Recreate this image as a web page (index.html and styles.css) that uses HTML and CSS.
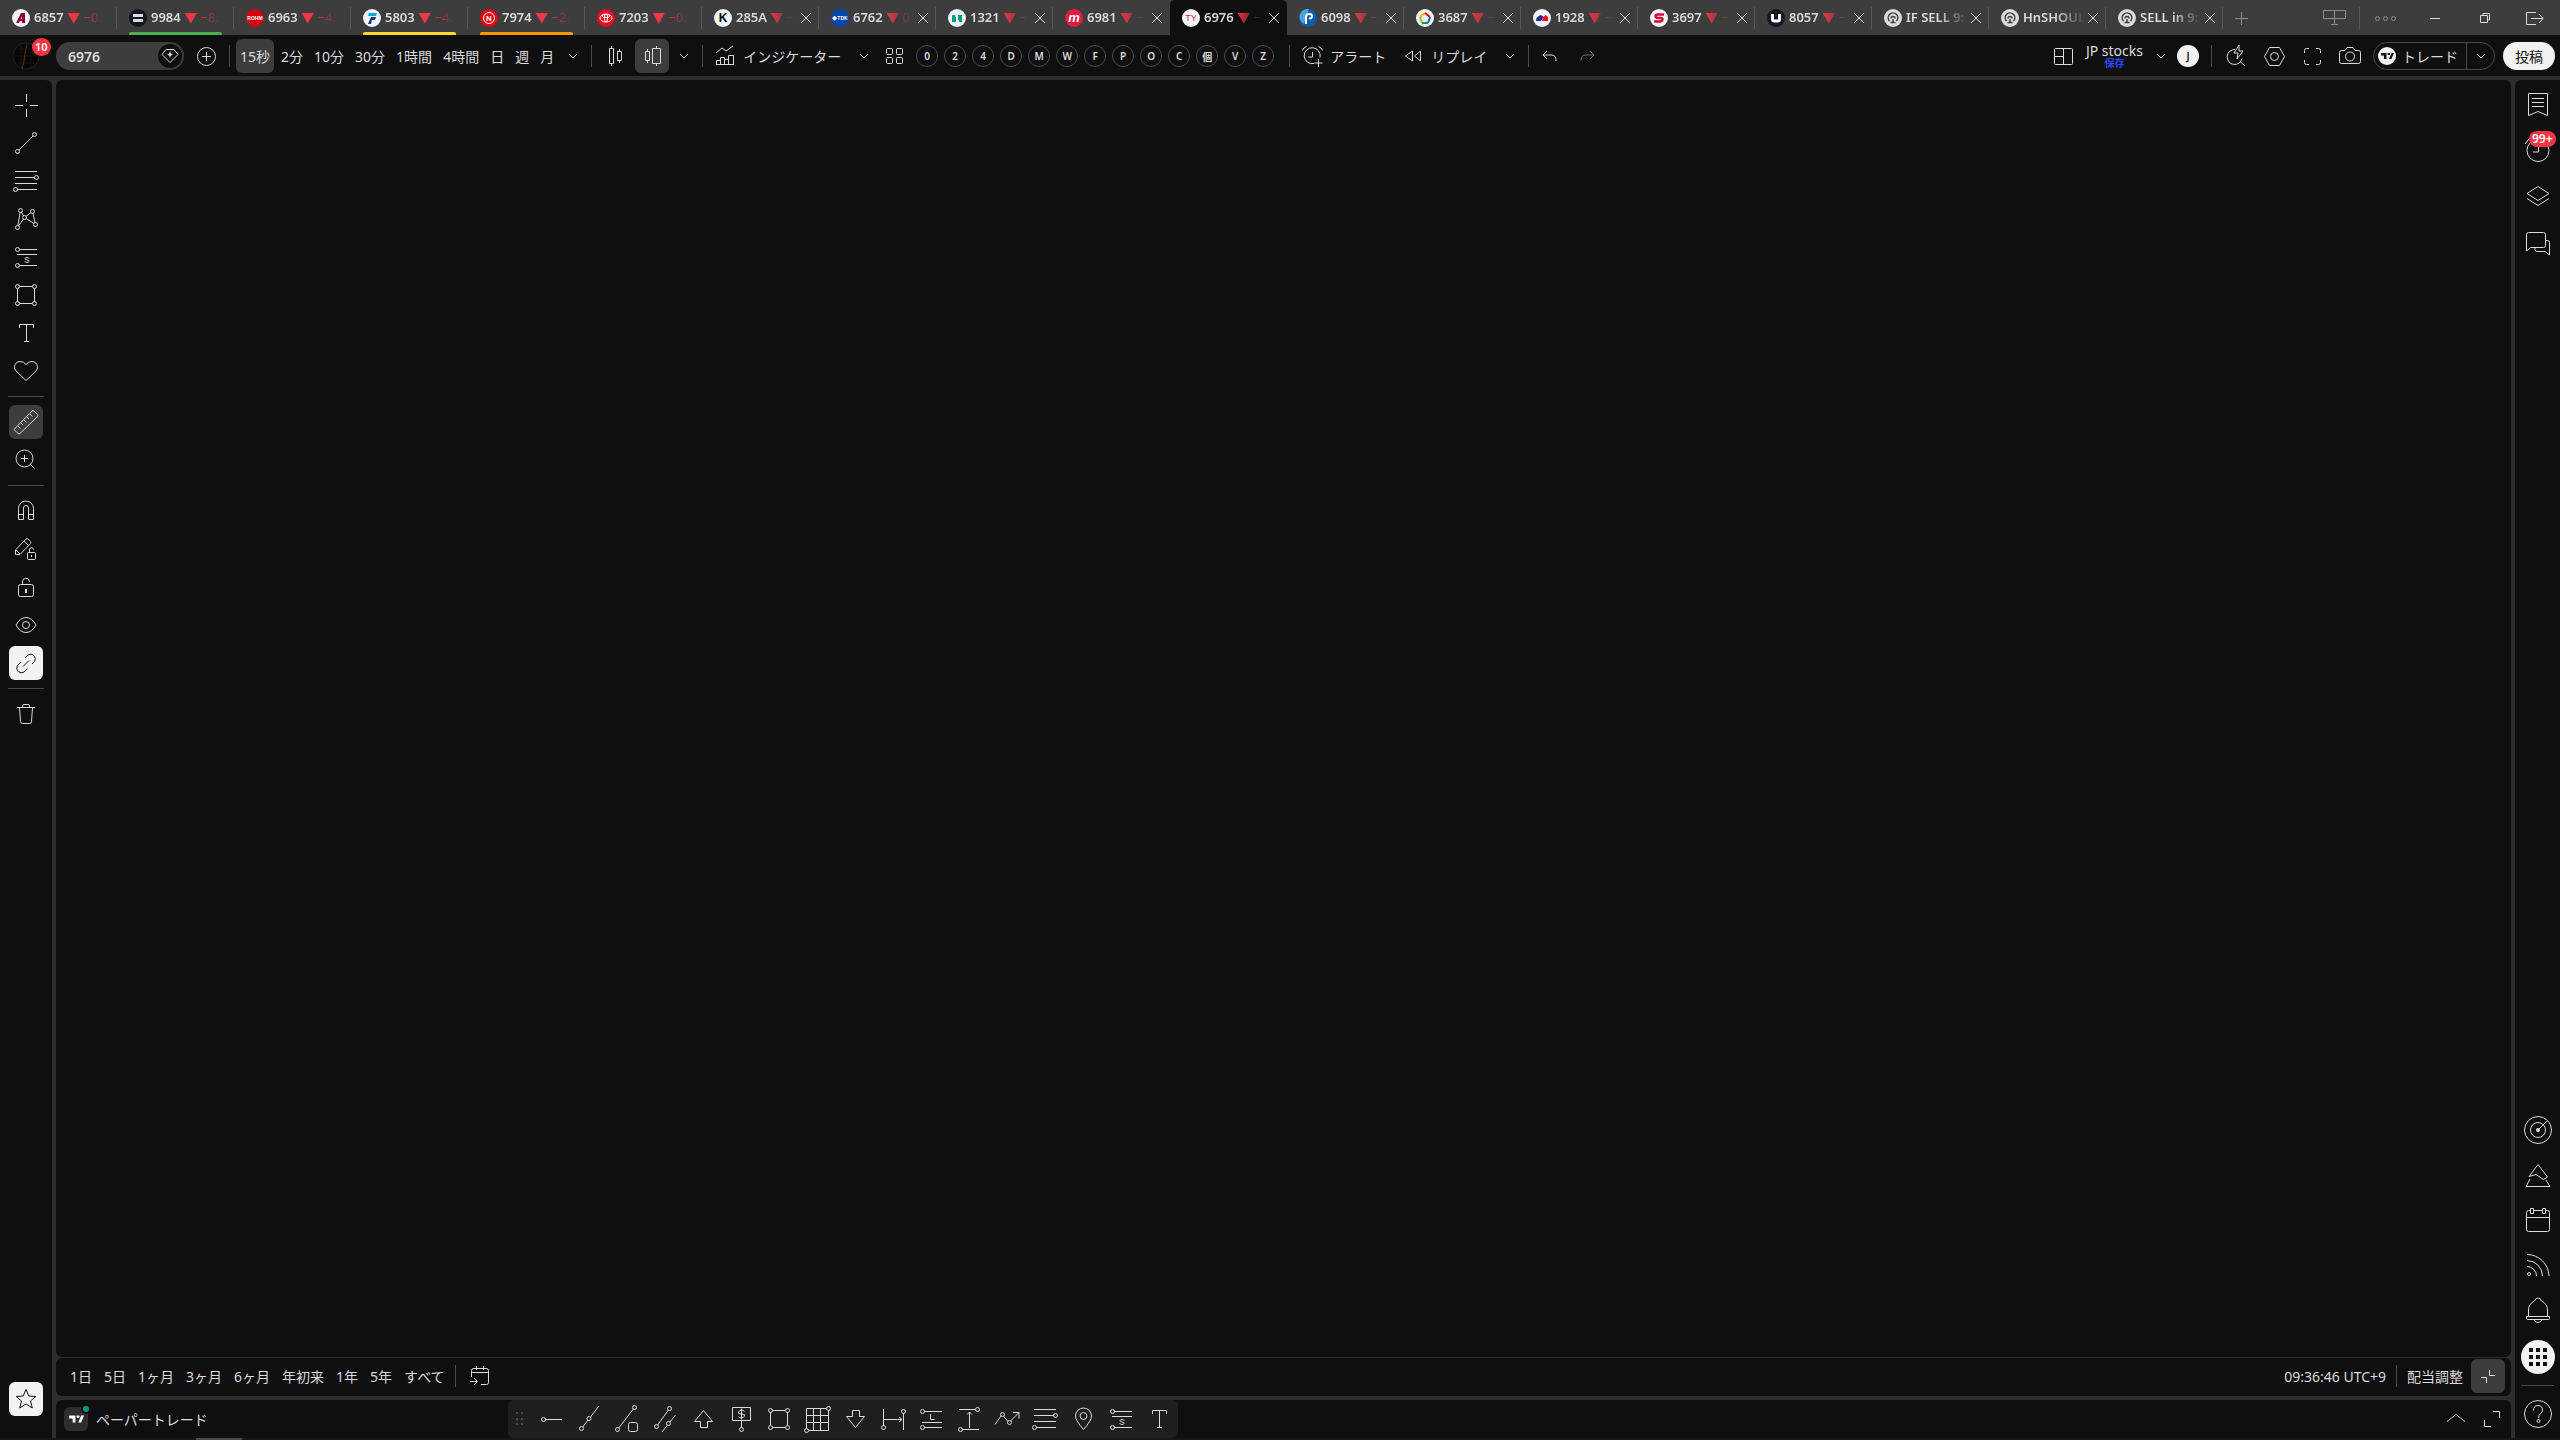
FILE: index.html
```html
<!DOCTYPE html>
<html lang="ja">
<head>
    <meta charset="UTF-8">
    <meta name="viewport" content="width=device-width, initial-scale=1.0">
    <title>6976</title>
    <link rel="stylesheet" href="styles.css">
</head>
<body>
    <svg class="sprite" aria-hidden="true">
        <symbol id="i-close" viewBox="0 0 12 12"><path d="M1 1l10 10M11 1L1 11"/></symbol>
        <symbol id="i-chevron" viewBox="0 0 10 10"><path d="M1 3l4 4 4-4"/></symbol>
        <symbol id="i-cross" viewBox="0 0 28 28"><path d="M3 14.500h8M18 14.500h8M14.500 3v8M14.500 18v8"/></symbol>
        <symbol id="i-line" viewBox="0 0 28 28"><path d="M5.500 22.500l17-17"/><circle class="node" cx="5.500" cy="22.500" r="2"/><circle class="node" cx="22.500" cy="5.500" r="2"/></symbol>
        <symbol id="i-fib" viewBox="0 0 28 28"><path d="M3 4.500h22M3 10.500h21M3 16.500h22M4 22.500h21"/><circle class="node" cx="24.500" cy="10.500" r="2"/><circle class="node" cx="3.500" cy="22.500" r="2"/></symbol>
        <symbol id="i-pattern" viewBox="0 0 28 28"><path d="M5.500 22.500l3-17 4 7 8-6 3 13-11-7z"/><circle class="node" cx="8.500" cy="5.500" r="2"/><circle class="node" cx="20.500" cy="6.500" r="2"/><circle class="node" cx="12.500" cy="12.500" r="2"/><circle class="node" cx="5.500" cy="22.500" r="2"/><circle class="node" cx="23.500" cy="19.500" r="2"/></symbol>
        <symbol id="i-short" viewBox="0 0 28 28"><path d="M6 6.500h19M5 11.500h20M6 22.500h19M17 16v-.5q-.3-1-2-1t-2 1 2 1.500 2 1.500-2 1-2-1V18"/><circle class="node" cx="5.500" cy="6.500" r="2"/><circle class="node" cx="5.500" cy="22.500" r="2"/></symbol>
        <symbol id="i-rect" viewBox="0 0 28 28"><path d="M5.500 5.500h17v17h-17z"/><circle class="node" cx="5.500" cy="5.500" r="2"/><circle class="node" cx="22.500" cy="5.500" r="2"/><circle class="node" cx="5.500" cy="22.500" r="2"/><circle class="node" cx="22.500" cy="22.500" r="2"/></symbol>
        <symbol id="i-text" viewBox="0 0 28 28"><path d="M7.500 9V5.500h14V9M14.500 5.500v17M12 22.500h5"/></symbol>
        <symbol id="i-tv" viewBox="0 0 28 28"><path class="solid" d="M2 8h11v12H8v-7H2zM18 20h5l5-12h-5zM15 8h5a2.500 2.500 0 1 1-5 2.500z"/></symbol>
        <symbol id="i-cap" viewBox="0 0 18 18"><circle cx="9" cy="9" r="9" fill="#dbdbdb"/><path d="M5.500 12a4.800 4.800 0 1 1 7 0M7 9.500a2 2 0 1 1 4 0M9 10v3.500M6.500 13.500h5" fill="none" stroke="#3d3d3d" stroke-width="1.500"/></symbol>
    </svg>

    <header class="tabs">
        <div class="tab pinned"><svg class="favicon" viewBox="0 0 18 18"><circle cx="9" cy="9" r="9" fill="#f0f3fa"/><path d="M4 14L9 4h4v10h-3v-2H8l-1 2z" fill="#8a0038"/><path d="M9 10l1-3v3z" fill="#fff"/></svg><a href="#6857">6857 <i>▼</i> <b>−0.</b></a></div>
        <div class="tab pinned green"><svg class="favicon" viewBox="0 0 18 18"><circle cx="9" cy="9" r="9" fill="#131722"/><path d="M4 5h10v3H4zM4 10h10v3H4z" fill="#ddd"/></svg><a href="#9984">9984 <i>▼</i> <b>−8.</b></a></div>
        <div class="tab pinned"><svg class="favicon" viewBox="0 0 18 18"><circle cx="9" cy="9" r="9" fill="#d7000f"/><text x="9" y="11" font-size="5" text-anchor="middle" fill="#fff">ROHM</text></svg><a href="#6963">6963 <i>▼</i> <b>−4.</b></a></div>
        <div class="tab pinned yellow"><svg class="favicon" viewBox="0 0 18 18"><circle cx="9" cy="9" r="9" fill="#f0f3fa"/><path d="M6 4h8l-1 3H5z" fill="#00a7e5"/><path d="M8 8h5l-1 3H9l-1 4H5z" fill="#0b3c8c"/></svg><a href="#5803">5803 <i>▼</i> <b>−4.</b></a></div>
        <div class="tab pinned orange"><svg class="favicon" viewBox="0 0 18 18"><circle cx="9" cy="9" r="9" fill="#e60012"/><circle cx="9" cy="9" r="5.500" fill="none" stroke="#fff"/><text x="9" y="12" font-size="8" text-anchor="middle" fill="#fff">N</text></svg><a href="#7974">7974 <i>▼</i> <b>−2.</b></a></div>
        <div class="tab pinned"><svg class="favicon" viewBox="0 0 18 18"><circle cx="9" cy="9" r="9" fill="#eb0a1e"/><g fill="none" stroke="#fff"><ellipse cx="9" cy="9" rx="6" ry="4"/><ellipse cx="9" cy="7" rx="4" ry="1.500"/><ellipse cx="9" cy="9" rx="1.500" ry="4"/></g></svg><a href="#7203">7203 <i>▼</i> <b>−0.</b></a></div>
        <div class="tab"><svg class="favicon" viewBox="0 0 18 18"><circle cx="9" cy="9" r="9" fill="#f0f3fa"/><text x="9" y="13" font-size="12" text-anchor="middle" fill="#000">K</text></svg><a href="#285A">285A <i>▼</i> <b>−</b></a><button aria-label="閉じる"><svg><use href="#i-close"/></svg></button></div>
        <div class="tab"><svg class="favicon" viewBox="0 0 18 18"><circle cx="9" cy="9" r="9" fill="#0046ad"/><text x="9" y="11" font-size="5" text-anchor="middle" fill="#fff">◆TDK</text></svg><a href="#6762">6762 <i>▼</i> <b>0</b></a><button aria-label="閉じる"><svg><use href="#i-close"/></svg></button></div>
        <div class="tab"><svg class="favicon" viewBox="0 0 18 18"><circle cx="9" cy="9" r="9" fill="#f0f3fa"/><path d="M4 6h4v7H4zM10 6h4v7h-4z" fill="#009f7f"/><path d="M7 6l4 7" stroke="#f0f3fa"/></svg><a href="#1321">1321 <i>▼</i> <b>−</b></a><button aria-label="閉じる"><svg><use href="#i-close"/></svg></button></div>
        <div class="tab"><svg class="favicon" viewBox="0 0 18 18"><circle cx="9" cy="9" r="9" fill="#e31b43"/><text x="9" y="13" font-size="13" font-style="italic" text-anchor="middle" fill="#fff">m</text></svg><a href="#6981">6981 <i>▼</i> <b>−</b></a><button aria-label="閉じる"><svg><use href="#i-close"/></svg></button></div>
        <div class="tab active"><svg class="favicon" viewBox="0 0 18 18"><circle cx="9" cy="9" r="9" fill="#f0f3fa"/><text class="thin" x="9" y="12" font-size="9" text-anchor="middle" fill="#e0243a">TY</text></svg><a href="#6976">6976 <i>▼</i> <b>−</b></a><button aria-label="閉じる"><svg><use href="#i-close"/></svg></button></div>
        <div class="tab"><svg class="favicon" viewBox="0 0 18 18"><circle cx="9" cy="9" r="9" fill="#0b5cab"/><path d="M1 5a9 9 0 0 1 9-5L5 15a9 9 0 0 1-4-10" fill="#4aa3d4"/><path d="M7 15V8q0-3 3-3 4 0 3 3-1 2-3 1" fill="none" stroke="#fff" stroke-width="2"/></svg><a href="#6098">6098 <i>▼</i> <b>−</b></a><button aria-label="閉じる"><svg><use href="#i-close"/></svg></button></div>
        <div class="tab"><svg class="favicon" viewBox="0 0 18 18"><circle cx="9" cy="9" r="9" fill="#f0f3fa"/><g fill="none" stroke-width="2"><path d="M4 8l5-4" stroke="#fbb900"/><path d="M9 4l5 4" stroke="#e60012"/><path d="M14 8l-2 6" stroke="#0068b7"/><path d="M12 14H6" stroke="#009944"/><path d="M6 14L4 8" stroke="#8fc31f"/></g></svg><a href="#3687">3687 <i>▼</i> <b>−</b></a><button aria-label="閉じる"><svg><use href="#i-close"/></svg></button></div>
        <div class="tab"><svg class="favicon" viewBox="0 0 18 18"><circle cx="9" cy="9" r="9" fill="#f0f3fa"/><path d="M3 12q0-4 3-5l1-1 3 1v2l-2 3H3z" fill="#1d2f8f"/><path d="M9 12l1-4 3-2 2 2v4z" fill="#f01020"/></svg><a href="#1928">1928 <i>▼</i> <b>−</b></a><button aria-label="閉じる"><svg><use href="#i-close"/></svg></button></div>
        <div class="tab"><svg class="favicon" viewBox="0 0 18 18"><circle cx="9" cy="9" r="9" fill="#f0f3fa"/><path d="M14 5.500H8q-2.500 0-2.500 1.500T8 9h2.500q2 0 2 1.500t-2.500 2H4" fill="none" stroke="#d80c32" stroke-width="2.500"/></svg><a href="#3697">3697 <i>▼</i> <b>−</b></a><button aria-label="閉じる"><svg><use href="#i-close"/></svg></button></div>
        <div class="tab"><svg class="favicon" viewBox="0 0 18 18"><circle cx="9" cy="9" r="9" fill="#131722"/><path d="M5.500 5v5q0 2 2 2h3q2 0 2-2V5" fill="none" stroke="#fff" stroke-width="3"/></svg><a href="#8057">8057 <i>▼</i> <b>−</b></a><button aria-label="閉じる"><svg><use href="#i-close"/></svg></button></div>
        <div class="tab"><svg class="favicon"><use href="#i-cap"/></svg><a href="#if-sell">IF SELL 9:</a><button aria-label="閉じる"><svg><use href="#i-close"/></svg></button></div>
        <div class="tab"><svg class="favicon"><use href="#i-cap"/></svg><a href="#hnshould">HnSHOULD</a><button aria-label="閉じる"><svg><use href="#i-close"/></svg></button></div>
        <div class="tab"><svg class="favicon"><use href="#i-cap"/></svg><a href="#sell-in">SELL in 9:</a><button aria-label="閉じる"><svg><use href="#i-close"/></svg></button></div>
        <button class="new-tab" aria-label="新しいタブ"><svg class="icon" viewBox="0 0 28 28"><path d="M14.500 8v13M8 14.500h13"/></svg></button>
        <div class="window-buttons">
            <button class="dim" aria-label="ウィンドウ"><svg class="icon" viewBox="0 0 28 28"><path d="M3.500 6.500h22v8h-22zM14.500 6.500v14M11 20.500h7"/></svg></button>
            <span class="divider"></span>
            <button class="dim" aria-label="メニュー"><svg class="icon" viewBox="0 0 28 28"><circle cx="6.500" cy="14.500" r="2"/><circle cx="14.500" cy="14.500" r="2"/><circle cx="22.500" cy="14.500" r="2"/></svg></button>
            <button aria-label="最小化"><svg class="icon" viewBox="0 0 28 28"><path d="M9 14.500h10"/></svg></button>
            <button aria-label="元に戻す"><svg class="icon" viewBox="0 0 28 28"><path d="M9.500 11.500h7v7h-7zM12 11V9.500h6.500V16H17"/></svg></button>
            <button aria-label="終了"><svg class="icon" viewBox="0 0 28 28"><path d="M15 8.500H5.500v12H15M10 14.500h12M18 10l4 4.500-4 4.500"/></svg></button>
        </div>
    </header>

    <div class="toolbar">
        <button class="avatar" aria-label="プロフィール"><svg viewBox="0 0 28 28"><circle cx="14" cy="14" r="13" fill="#060606" stroke="#242424"/><path d="M6 7h16M3 14h22M6 21h16M9 3v22M19 3v22" stroke="#151515"/><path d="M15 2l-2 9-1 8-2 8" stroke="#6e2810" fill="none"/></svg><span class="badge">10</span></button>
        <div class="symbol-search">
            <input type="text" value="6976" aria-label="シンボル検索">
            <button aria-label="フラグ"><svg class="icon small" viewBox="0 0 24 24"><path d="M8 5.500h8l4 5-8 8-8-8zM12 7.500v6M9.500 10.500h5"/><circle class="solid" cx="12" cy="10.500" r="1.500"/></svg></button>
        </div>
        <button class="tool add" aria-label="比較"><svg class="icon" viewBox="0 0 28 28"><circle cx="14.500" cy="14.500" r="9"/><path d="M14.500 10v9M10 14.500h9"/></svg></button>
        <span class="divider"></span>
        <button class="interval selected">15秒</button>
        <button class="interval">2分</button>
        <button class="interval">10分</button>
        <button class="interval">30分</button>
        <button class="interval">1時間</button>
        <button class="interval">4時間</button>
        <button class="interval">日</button>
        <button class="interval">週</button>
        <button class="interval">月</button>
        <button class="arrow" aria-label="時間足"><svg><use href="#i-chevron"/></svg></button>
        <span class="divider"></span>
        <button class="tool" aria-label="ローソク足"><svg class="icon" viewBox="0 0 28 28"><path d="M8.500 6.500h4v15h-4zM10.500 4v2.500M10.500 21.500V24M16.500 9.500h4v9h-4zM18.500 7v2.500M18.500 18.500V21"/></svg></button>
        <button class="tool selected" aria-label="中空ローソク足"><svg class="icon" viewBox="0 0 28 28"><path d="M7.500 9.500h4v9h-4zM9.500 7v2.500M9.500 18.500V21M14.500 6.500h8v15h-8zM18.500 4v2.500M18.500 21.500V24"/></svg></button>
        <button class="arrow" aria-label="チャートタイプ"><svg><use href="#i-chevron"/></svg></button>
        <span class="divider"></span>
        <button class="labelled"><svg class="icon small" viewBox="0 0 24 24"><path d="M3 9l6-5 4 3 7-5M3.500 20.500v-4h4v4zM7.500 20.500v-7h4v7M11.500 20.500v-5h4v5M15.500 20.500v-9h5v9zM3.500 20.500h17"/></svg>インジケーター</button>
        <button class="arrow" aria-label="お気に入り"><svg><use href="#i-chevron"/></svg></button>
        <button class="tool" aria-label="テンプレート"><svg class="icon" viewBox="0 0 28 28"><rect x="4.500" y="6.500" width="6" height="6" rx="1"/><rect x="14.500" y="6.500" width="6" height="6" rx="1"/><rect x="4.500" y="15.500" width="6" height="6" rx="1"/><rect x="14.500" y="15.500" width="6" height="6" rx="1"/></svg></button>
        <div class="templates">
            <button>0</button>
            <button>2</button>
            <button>4</button>
            <button>D</button>
            <button>M</button>
            <button>W</button>
            <button>F</button>
            <button>P</button>
            <button>O</button>
            <button>C</button>
            <button>個</button>
            <button>V</button>
            <button>Z</button>
        </div>
        <span class="divider"></span>
        <button class="labelled"><svg class="icon small" viewBox="0 0 24 24"><path d="M14 19.500a8 8 0 1 1 6-6M12.500 8v5H8M2.500 6.500q1-3 4-4M18.500 2.500q3 1 4 4M18.500 15v8M14.500 19h8"/></svg>アラート</button>
        <button class="labelled"><svg class="icon small" viewBox="0 0 24 24"><path d="M11.500 7v10l-7-5zM19.500 7v10l-6-5z"/></svg>リプレイ</button>
        <button class="arrow" aria-label="リプレイモード"><svg><use href="#i-chevron"/></svg></button>
        <span class="divider"></span>
        <button class="tool" aria-label="元に戻す"><svg class="icon" viewBox="0 0 28 28"><path d="M9 9l-4 4 4 4M5 13h8q5 0 5 5v1"/></svg></button>
        <button class="tool disabled" aria-label="やり直す"><svg class="icon" viewBox="0 0 28 28"><path d="M15 9l4 4-4 4M19 13h-8q-5 0-5 5v1"/></svg></button>

        <div class="toolbar-right">
            <button class="tool" aria-label="レイアウト"><svg class="icon" viewBox="0 0 28 28"><rect x="5.500" y="6.500" width="18" height="16" rx="1"/><path d="M14.500 6.500v16M5.500 14.500h9"/></svg></button>
            <button class="layout-name"><span>JP stocks</span><small>保存</small></button>
            <button class="arrow" aria-label="レイアウト管理"><svg><use href="#i-chevron"/></svg></button>
            <button class="user">J</button>
            <span class="divider"></span>
            <button class="tool" aria-label="クイック検索"><svg class="icon" viewBox="0 0 28 28"><path d="M13 7.500a7.500 7.500 0 1 0 7 9M18 19.500l5 4.500M17 3l-5 8h4l-1 6 6-8h-4z"/></svg></button>
            <button class="tool" aria-label="設定"><svg class="icon" viewBox="0 0 28 28"><path d="M9.500 5.500h10l5 9-5 9h-10l-5-9z"/><circle cx="14.500" cy="14.500" r="4"/></svg></button>
            <button class="tool" aria-label="全画面"><svg class="icon" viewBox="0 0 28 28"><path d="M6.500 11V8.500q0-2 2-2H11M18 6.500h2.500q2 0 2 2V11M22.500 18v2.500q0 2-2 2H18M11 22.500H8.500q-2 0-2-2V18"/></svg></button>
            <button class="tool" aria-label="スナップショット"><svg class="icon" viewBox="0 0 28 28"><path d="M5.500 8.500H9l2-3h6l2 3h3.500q2 0 2 2v9q0 2-2 2h-17q-2 0-2-2v-9q0-2 2-2z"/><circle cx="14" cy="14.500" r="4.500"/></svg></button>
            <div class="trade">
                <button><span class="tv"><svg><use href="#i-tv"/></svg></span>トレード</button>
                <button class="trade-arrow" aria-label="トレードメニュー"><svg class="chev"><use href="#i-chevron"/></svg></button>
            </div>
            <button class="publish">投稿</button>
        </div>
    </div>

    <div class="workspace">
        <nav class="rail left">
            <div class="group">
                <button class="tool" aria-label="十字カーソル"><svg class="icon"><use href="#i-cross"/></svg></button>
                <button class="tool" aria-label="トレンドライン"><svg class="icon"><use href="#i-line"/></svg></button>
                <button class="tool" aria-label="フィボナッチ"><svg class="icon"><use href="#i-fib"/></svg></button>
                <button class="tool" aria-label="パターン"><svg class="icon"><use href="#i-pattern"/></svg></button>
                <button class="tool" aria-label="予測"><svg class="icon"><use href="#i-short"/></svg></button>
                <button class="tool" aria-label="図形"><svg class="icon"><use href="#i-rect"/></svg></button>
                <button class="tool" aria-label="テキスト"><svg class="icon"><use href="#i-text"/></svg></button>
                <button class="tool" aria-label="アイコン"><svg class="icon" viewBox="0 0 28 28"><path d="M14 23.500L4 14a6 6 0 0 1-1.500-4.500 5.500 5.500 0 0 1 5.500-5q4 0 6 3 2-3 6-3a5.500 5.500 0 0 1 5.500 5A6 6 0 0 1 24 14z"/></svg></button>
            </div>
            <hr>
            <div class="group">
                <button class="tool selected" aria-label="計測"><svg class="icon" viewBox="0 0 28 28"><path d="M2.500 21L20 3q1-1 2 0l3.500 3.500q1 1 0 2L8 25.500q-1 .5-2 0L2.500 22q-.5-.5 0-1zM6 18l2.500 2.500M9 15l2 2M12 12l2.500 2.500M15 9l2 2M18 6l2.500 2.500"/></svg></button>
                <button class="tool" aria-label="ズーム"><svg class="icon" viewBox="0 0 28 28"><circle cx="12.500" cy="12.500" r="8.500"/><path d="M12.500 9v7M9 12.500h7M18 18l4.500 4.500"/></svg></button>
            </div>
            <hr>
            <div class="group">
                <button class="tool" aria-label="マグネット"><svg class="icon" viewBox="0 0 28 28"><path d="M6.500 22.500v-11a7.500 7.500 0 0 1 15 0v11h-5V11a2.500 2.500 0 0 0-5 0v11.500zM6.500 17.500h5M16.500 17.500h5"/></svg></button>
                <button class="tool" aria-label="描画モードを維持"><svg class="icon" viewBox="0 0 28 28"><path d="M3.500 19.500V15L14 4q1-1 2 0l2.500 2.500q1 1 0 2L8 19.500zM12 6l4.500 4.500M4 15l4 4"/><rect x="15.500" y="17.500" width="8" height="7" rx="1"/><path d="M17.500 17.500V15a2 2 0 0 1 4-.5M19.500 20v2"/></svg></button>
                <button class="tool" aria-label="ロック"><svg class="icon" viewBox="0 0 28 28"><rect x="6.500" y="11.500" width="15" height="12" rx="2"/><path d="M10.500 11.500V9a3.500 3.500 0 0 1 7-.5V9"/><path d="M14 16v4" stroke-width="2"/></svg></button>
                <button class="tool" aria-label="表示"><svg class="icon" viewBox="0 0 28 28"><path d="M4 14q4-7.500 10-7.500T24 14q-4 7.500-10 7.500T4 14z"/><circle cx="14" cy="14" r="3.500"/></svg></button>
                <button class="tool light" aria-label="リンク"><svg class="icon" viewBox="0 0 28 28"><path d="M13 9l3-3a4.700 4.700 0 0 1 6.500 6.500L20 15M9 13l-3.500 3.500A4.700 4.700 0 0 0 12 23l3.500-3.500M11 17.500l6-6"/></svg></button>
            </div>
            <hr>
            <button class="tool" aria-label="削除"><svg class="icon" viewBox="0 0 28 28"><path d="M5 7.500h18M10.500 7.500V6q0-1.500 1.500-1.500h4q1.500 0 1.500 1.500v1.500M7.500 7.500l1 14q0 2 2 2h7q2 0 2-2l1-14"/></svg></button>
            <button class="tool light push" aria-label="お気に入り描画ツール"><svg class="icon" viewBox="0 0 28 28"><path d="M14 4.500l2.800 6.500 7 .5-5.300 4.500 1.800 7L14 19l-6.300 4 1.800-7-5.300-4.500 7-.5z"/></svg></button>
        </nav>

        <main>
            <section class="chart"></section>
            <section class="ranges">
                <button>1日</button>
                <button>5日</button>
                <button>1ヶ月</button>
                <button>3ヶ月</button>
                <button>6ヶ月</button>
                <button>年初来</button>
                <button>1年</button>
                <button>5年</button>
                <button>すべて</button>
                <span class="divider"></span>
                <button aria-label="日付へ移動"><svg class="icon" viewBox="0 0 28 28"><path d="M5.500 15V8.500q0-2 2-2h13q2 0 2 2v12q0 2-2 2H15M5.500 10.500h17M10.500 4v4M17.500 4v4M4 19.500h7M8 16l3.500 3.500L8 23"/></svg></button>
                <div class="ranges-right">
                    <button>09:36:46 UTC+9</button>
                    <span class="divider"></span>
                    <button>配当調整</button>
                    <button class="tool selected" aria-label="縮小"><svg class="icon" viewBox="0 0 28 28"><path d="M15.500 8v5.500H21M7 15.500h5.500V21"/></svg></button>
                </div>
            </section>
            <section class="panel">
                <button class="broker"><span class="broker-logo"><svg><use href="#i-tv"/></svg><span class="dot"></span></span>ペーパートレード</button>
                <div class="drawings">
                    <svg class="grip" viewBox="0 0 8 14"><path d="M0 1h2M5 1h2M0 7h2M5 7h2M0 12h2M5 12h2" stroke="#4a4a4a" stroke-width="2"/></svg>
                    <button class="tool" aria-label="水平レイ"><svg class="icon" viewBox="0 0 28 28"><path d="M6 14.500h19"/><circle class="node" cx="6.500" cy="14.500" r="2"/></svg></button>
                    <button class="tool" aria-label="レイ"><svg class="icon" viewBox="0 0 28 28"><path d="M6.500 23.500L24 1"/><circle class="node" cx="6.500" cy="23.500" r="2"/><circle class="node" cx="14" cy="13.500" r="2"/></svg></button>
                    <button class="tool" aria-label="情報ライン"><svg class="icon" viewBox="0 0 28 28"><path d="M4.500 24.500l17-22"/><circle class="node" cx="4.500" cy="24.500" r="2"/><circle class="node" cx="21.500" cy="2.500" r="2"/><rect x="15.500" y="17.500" width="9" height="9" rx="2"/></svg></button>
                    <button class="tool" aria-label="平行チャネル"><svg class="icon" viewBox="0 0 28 28"><path d="M5.500 21.500l13-18M11 27l13.500-17"/><circle class="node" cx="5.500" cy="21.500" r="2"/><circle class="node" cx="18.500" cy="3.500" r="2"/><circle class="node" cx="17.500" cy="18.500" r="2"/></svg></button>
                    <button class="tool" aria-label="上矢印"><svg class="icon" viewBox="0 0 28 28"><path d="M14.500 5.500l9 11h-5v6h-7v-6h-6z"/></svg></button>
                    <button class="tool" aria-label="価格ノート"><svg class="icon" viewBox="0 0 28 28"><path d="M5.500 2.500h18v13h-18zM14.500 15.500v7M17.500 6.500q-1-1.500-3-1.500t-3 2 3 2 3 2-3 2-3-1.500M14.500 3.500v11"/><circle class="node" cx="14.500" cy="24.500" r="2"/></svg></button>
                    <button class="tool" aria-label="長方形"><svg class="icon"><use href="#i-rect"/></svg></button>
                    <button class="tool" aria-label="ギャン"><svg class="icon" viewBox="0 0 28 28"><path d="M3.500 3.500h22v22h-22zM10.500 3.500v22M17.500 3.500v22M3.500 10.500h22M3.500 17.500h22"/><circle class="node" cx="3.500" cy="25.500" r="2"/><circle class="node" cx="25.500" cy="3.500" r="2"/></svg></button>
                    <button class="tool" aria-label="下矢印"><svg class="icon" viewBox="0 0 28 28"><path d="M14.500 22.500l9-11h-5v-6h-7v6h-6z"/></svg></button>
                    <button class="tool" aria-label="日付範囲"><svg class="icon" viewBox="0 0 28 28"><path d="M4.500 4v18M24.500 6v19M5 14.500h17M20 12l3 2.500-3 2.500"/><circle class="node" cx="4.500" cy="22.500" r="2"/><circle class="node" cx="24.500" cy="6.500" r="2"/></svg></button>
                    <button class="tool" aria-label="買いポジション"><svg class="icon" viewBox="0 0 28 28"><path d="M6 6.500h19M5 17.500h20M6 22.500h19M13.500 9v5.500h4"/><circle class="node" cx="5.500" cy="6.500" r="2"/><circle class="node" cx="5.500" cy="22.500" r="2"/></svg></button>
                    <button class="tool" aria-label="価格範囲"><svg class="icon" viewBox="0 0 28 28"><path d="M4 4.500h18M6 24.500h18M14.500 7v16M12 9.500L14.500 7 17 9.500"/><circle class="node" cx="22.500" cy="4.500" r="2"/><circle class="node" cx="5.500" cy="24.500" r="2"/></svg></button>
                    <button class="tool" aria-label="エリオット波動"><svg class="icon" viewBox="0 0 28 28"><path d="M2 19.500l7-10 7 8 10-10M20 7.500h6v6"/><circle class="node" cx="9.500" cy="9.500" r="2"/><circle class="node" cx="16.500" cy="17.500" r="2"/></svg></button>
                    <button class="tool" aria-label="フィボナッチ"><svg class="icon"><use href="#i-fib"/></svg></button>
                    <button class="tool" aria-label="ピン"><svg class="icon" viewBox="0 0 28 28"><path d="M14.500 24.500q-8-9-8-13.500a8 8 0 0 1 16 0q0 4.500-8 13.500z"/><circle cx="14.500" cy="11" r="3.500"/></svg></button>
                    <button class="tool" aria-label="売りポジション"><svg class="icon"><use href="#i-short"/></svg></button>
                    <button class="tool" aria-label="テキスト"><svg class="icon"><use href="#i-text"/></svg></button>
                </div>
                <div class="panel-right">
                    <button class="tool" aria-label="パネルを開く"><svg class="icon" viewBox="0 0 28 28"><path d="M5 16.500l9-7 9 7"/></svg></button>
                    <button class="tool" aria-label="最大化"><svg class="icon" viewBox="0 0 28 28"><path d="M15 6.500h6.500V13M6.500 15v6.500H13"/></svg></button>
                </div>
            </section>
        </main>

        <aside class="rail right">
            <div class="group side-top">
                <button class="side" aria-label="ウォッチリスト"><svg class="icon" viewBox="0 0 28 28"><path d="M4.500 3.500h19v22L14 21.500l-9.500 4zM8 8.500h12M8 12.500h12M8 16.500h12"/></svg></button>
                <button class="side" aria-label="アラート"><svg class="icon" viewBox="0 0 28 28"><circle cx="14" cy="14.500" r="11"/><path d="M14.500 8v8H9M1 8l4-5"/></svg><span class="badge">99+</span></button>
                <button class="side" aria-label="オブジェクトツリー"><svg class="icon" viewBox="0 0 28 28"><path d="M14 4.500l11 7-11 7-11-7zM3 16.500l11 7 11-7"/></svg></button>
                <button class="side" aria-label="チャット"><svg class="icon" viewBox="0 0 28 28"><path d="M2.500 23V6.500q0-2 2-2h15q2 0 2 2v11q0 2-2 2h-13zM21.500 12.500h2q2 0 2 2V27L21 23.500h-8q-2 0-2-2v-2"/></svg></button>
            </div>
            <button class="side push" aria-label="スクリーナー"><svg class="icon" viewBox="0 0 28 28"><circle cx="14" cy="14" r="13.500"/><circle cx="14" cy="14" r="7.500"/><path d="M14 14l9-9"/><circle class="solid" cx="14" cy="14" r="2"/></svg></button>
            <button class="side" aria-label="Pine"><svg class="icon" viewBox="0 0 28 28"><path d="M5 15.500l9-12 9.500 12.500-4 2.500-7.500-5zM6 18l-4 7.500h24L22 19"/></svg></button>
            <button class="side" aria-label="カレンダー"><svg class="icon" viewBox="0 0 28 28"><path d="M6 4.500H4.500q-2 0-2 2v17q0 2 2 2h19q2 0 2-2v-17q0-2-2-2H22M10 4.500h8M2.500 11.500h23M6.500 2.500h3v5h-3zM18.500 2.500h3v5h-3z"/></svg></button>
            <button class="side" aria-label="ニュース"><svg class="icon" viewBox="0 0 28 28"><path d="M3 3.500a22 22 0 0 1 22 21.500M3 9.500A15.500 15.500 0 0 1 18.500 25M3 15.500A9.500 9.500 0 0 1 12.500 25"/><circle cx="5" cy="23" r="1.500"/></svg></button>
            <button class="side" aria-label="通知"><svg class="icon" viewBox="0 0 28 28"><path d="M4.500 20.500V14q0-6 6-9 1-3 3.500-3t3.500 3q6 3 6 9v6.500M2.500 20.500h23v2q0 1-1 1h-21q-1 0-1-1zM10 23.500q1 3 4 3t4-3"/></svg></button>
            <button class="apps" aria-label="製品"><svg viewBox="0 0 34 34"><path d="M8 8h4v4H8zM15 8h4v4h-4zM22 8h4v4h-4zM8 15h4v4H8zM15 15h4v4h-4zM22 15h4v4h-4zM8 22h4v4H8zM15 22h4v4h-4zM22 22h4v4h-4z" fill="#0f0f0f"/></svg></button>
            <hr>
            <button aria-label="ヘルプ"><svg class="icon" viewBox="0 0 28 28"><circle cx="14" cy="14" r="13.500"/><path d="M9.500 10.500q0-5 4.500-5t4.500 4.500q0 2-2 3.500T14.500 18"/><circle cx="14.500" cy="21" r="1.500"/></svg></button>
        </aside>
    </div>

    <footer class="scroll-strip"><span></span></footer>
</body>
</html>
```
FILE: styles.css
```css
:root {
    --surface: #0f0f0f;
    --raised: #3d3d3d;
    --gap: #2e2e2e;
    --line: #575757;
    --text: #dbdbdb;
    --red: #f23645;
}
* {
    box-sizing: border-box;
}
body {
    margin: 0;
    height: 100vh;
    display: flex;
    flex-direction: column;
    overflow: hidden;
    background: var(--gap);
    color: var(--text);
    font-family: "Noto Sans", "Noto Sans CJK JP", sans-serif;
    font-size: 14px;
}
button {
    display: flex;
    align-items: center;
    justify-content: center;
    flex: none;
    padding: 0;
    border: none;
    background: none;
    color: inherit;
    font: inherit;
    white-space: nowrap;
    cursor: pointer;
}
svg {
    display: block;
    flex: none;
}
.sprite {
    position: absolute;
    width: 0;
    height: 0;
}
.icon {
    width: 28px;
    height: 28px;
    fill: none;
    stroke: currentColor;
}
.icon.small {
    width: 24px;
    height: 24px;
}
.node {
    fill: var(--surface);
}
.solid {
    fill: currentColor;
    stroke: none;
}
.divider {
    flex: none;
    width: 1px;
    height: 22px;
    margin: 0 3px;
    background: #4a4a4a;
}
.badge {
    position: absolute;
    height: 16px;
    min-width: 16px;
    padding: 0 3px;
    border-radius: 8px;
    background: var(--red);
    color: #fff;
    font-size: 11px;
    font-weight: 600;
    line-height: 16px;
}

/* tab strip */
.tabs {
    display: flex;
    flex: none;
    align-items: center;
    height: 35px;
    background: var(--raised);
}
.tab {
    display: flex;
    align-items: center;
    position: relative;
    width: 117px;
    height: 35px;
    padding-left: 12px;
    font-size: 13px;
    font-weight: 600;
}
.tab::after {
    content: "";
    position: absolute;
    right: 0;
    top: 7px;
    width: 1px;
    height: 22px;
    background: var(--line);
}
.tab.active {
    background: var(--surface);
    border-radius: 5px 5px 0 0;
}
.tab.active::after,
.tab:has(+ .active)::after {
    display: none;
}
.tab.green { --mark: #4caf50; }
.tab.yellow { --mark: #fdd835; }
.tab.orange { --mark: #ff9800; }
.tab::before {
    content: "";
    position: absolute;
    left: 12px;
    right: 12px;
    bottom: 0;
    height: 3px;
    border-radius: 2px 2px 0 0;
    background: var(--mark, transparent);
}
.tab a {
    width: 72px;
    margin: 0 -11px 0 4px;
    padding-bottom: 2px;
    white-space: nowrap;
    color: inherit;
    text-decoration: none;
    -webkit-mask-image: linear-gradient(90deg, #000 32px, transparent 62px);
    mask-image: linear-gradient(90deg, #000 32px, transparent 62px);
}
.tab.pinned a {
    margin-right: 0;
    -webkit-mask-image: linear-gradient(90deg, #000 45px, transparent 72px);
    mask-image: linear-gradient(90deg, #000 45px, transparent 72px);
}
.tab i,
.tab b {
    color: var(--red);
    font-style: normal;
    font-weight: 400;
}
.tab button {
    width: 17px;
    height: 18px;
}
.tab button svg {
    width: 12px;
    height: 12px;
    stroke: currentColor;
}
.favicon {
    width: 18px;
    height: 18px;
    font-family: "Liberation Sans", sans-serif;
    font-weight: 700;
}
.favicon .thin {
    font-weight: 400;
}
.new-tab {
    width: 36px;
    color: #8c8c8c;
}
.window-buttons {
    display: flex;
    align-items: center;
    margin-left: auto;
}
.window-buttons button {
    width: 50px;
}
.window-buttons .divider {
    margin: 0;
    background: var(--line);
}
.dim {
    color: #8c8c8c;
}

/* top toolbar */
.toolbar {
    display: flex;
    flex: none;
    align-items: center;
    gap: 3px;
    height: 45px;
    padding: 1px 5px 0 12px;
    background: var(--surface);
    border-bottom: 4px solid var(--gap);
}
.avatar {
    position: relative;
    width: 28px;
    height: 28px;
}
.avatar svg {
    width: 28px;
    height: 28px;
}
.avatar .badge {
    left: 20px;
    top: -4px;
    height: 18px;
    min-width: 18px;
    border-radius: 9px;
    line-height: 18px;
}
.symbol-search {
    display: flex;
    align-items: center;
    width: 128px;
    height: 28px;
    margin-left: 13px;
    padding: 0 2px 0 12px;
    border-radius: 14px;
    background: var(--raised);
}
.symbol-search input {
    flex: 1;
    min-width: 0;
    padding: 0;
    border: none;
    outline: none;
    background: none;
    color: inherit;
    font: inherit;
    font-weight: 600;
}
.symbol-search button {
    border-radius: 50%;
    background: var(--surface);
}
.tool {
    width: 34px;
    height: 34px;
    border-radius: 6px;
}
.tool.add {
    margin-left: 2px;
}
.tool.disabled {
    color: #6e6e6e;
}
.selected {
    background: var(--raised);
}
.tool.light {
    background: #f2f2f2;
    color: #0f0f0f;
}
.interval {
    height: 34px;
    padding: 0 4px;
    border-radius: 6px;
}
.arrow {
    width: 24px;
    height: 34px;
}
.arrow svg,
.chev {
    width: 10px;
    height: 10px;
    fill: none;
    stroke: currentColor;
}
.labelled {
    gap: 6px;
    height: 34px;
    margin-right: 4px;
    padding: 0 4px;
}
.templates {
    display: flex;
    gap: 6px;
    margin-right: 9px;
}
.templates button {
    width: 22px;
    height: 22px;
    border: 1px solid #4a4a4a;
    border-radius: 50%;
    font-size: 10px;
    font-weight: 600;
}
.toolbar-right {
    display: flex;
    align-items: center;
    gap: 4px;
    margin-left: auto;
}
.layout-name {
    flex-direction: column;
    padding: 0 2px;
    line-height: 14px;
}
.layout-name small {
    color: #2947ff;
    font-size: 10px;
    font-weight: 700;
    line-height: 10px;
}
.user {
    width: 22px;
    height: 22px;
    margin-right: 5px;
    border-radius: 50%;
    background: #f2f2f2;
    color: #0f0f0f;
    font-size: 10px;
    font-weight: 600;
}
.trade {
    display: flex;
    height: 28px;
    margin: 0 4px 0 2px;
    border: 1px solid #4a4a4a;
    border-radius: 14px;
}
.trade button {
    gap: 6px;
    padding: 0 8px 0 4px;
}
.trade .trade-arrow {
    width: 28px;
    padding: 0;
    border-left: 1px solid #4a4a4a;
}
.tv {
    display: flex;
    align-items: center;
    justify-content: center;
    width: 18px;
    height: 18px;
    border-radius: 50%;
    background: #f2f2f2;
    color: #0f0f0f;
}
.tv svg {
    width: 14px;
    height: 14px;
}
.publish {
    height: 28px;
    padding: 0 12px;
    border-radius: 14px;
    background: #f2f2f2;
    color: #0f0f0f;
}

/* workspace */
.workspace {
    display: flex;
    flex: 1;
    gap: 4px;
    min-height: 0;
}
.rail {
    display: flex;
    flex: none;
    flex-direction: column;
    align-items: center;
    background: var(--surface);
}
.rail hr {
    flex: none;
    width: 36px;
    height: 1px;
    margin: 8px 0;
    border: none;
    background: #4a4a4a;
}
.rail .push {
    margin-top: auto;
}
.rail.left {
    width: 52px;
    padding: 8px 0 22px;
    border-radius: 0 6px 0 0;
}
.group {
    display: flex;
    flex-direction: column;
    gap: 4px;
}
.rail.right {
    width: 45px;
    padding: 1px 0 10px;
    border-radius: 6px 0 0 0;
}
.side {
    position: relative;
    width: 45px;
    height: 45px;
}
.side-top {
    gap: 1px;
}
.side .badge {
    left: 14px;
    top: 4px;
    font-size: 12px;
}
.apps {
    width: 34px;
    height: 34px;
    margin-top: 8px;
    border-radius: 50%;
    background: #f2f2f2;
}
.apps svg {
    width: 34px;
    height: 34px;
}
.rail.right hr {
    width: 33px;
    margin: 11px 0 14px;
}
main {
    display: flex;
    flex: 1;
    flex-direction: column;
    min-width: 0;
}
.chart {
    flex: 1;
    border-radius: 6px;
    background: var(--surface);
}
.ranges {
    display: flex;
    flex: none;
    align-items: center;
    height: 38px;
    margin: 1px 0 4px;
    padding: 0 6px 2px 8px;
    border-radius: 6px;
    background: var(--surface);
}
.ranges button {
    padding: 0 6px;
}
.ranges .divider {
    margin: 0 4px;
}
.ranges-right,
.panel-right {
    display: flex;
    align-items: center;
    margin-left: auto;
}
.ranges-right .tool {
    margin-left: 2px;
}
.panel {
    display: flex;
    flex: none;
    align-items: center;
    height: 38px;
    border-radius: 6px 6px 0 0;
    background: var(--surface);
}
.broker {
    justify-content: flex-start;
    gap: 8px;
    width: 452px;
    padding-left: 8px;
}
.broker-logo {
    display: flex;
    align-items: center;
    justify-content: center;
    position: relative;
    width: 24px;
    height: 24px;
    border-radius: 6px;
    background: var(--gap);
    color: #fff;
}
.broker-logo svg {
    width: 16px;
    height: 16px;
}
.dot {
    position: absolute;
    right: -3px;
    top: -3px;
    width: 10px;
    height: 10px;
    border: 2px solid var(--surface);
    border-radius: 50%;
    background: #089981;
}
.drawings {
    --surface: #1f1f1f;
    display: flex;
    align-items: center;
    gap: 4px;
    height: 38px;
    padding: 0 2px 0 8px;
    border-radius: 6px;
    background: var(--surface);
}
.grip {
    width: 8px;
    height: 14px;
    margin-right: 6px;
}
.panel-right {
    padding-right: 2px;
    gap: 2px;
}
.scroll-strip {
    flex: none;
    height: 2px;
    padding-left: 196px;
    background: #1a1618;
}
.scroll-strip span {
    display: block;
    width: 46px;
    height: 2px;
    background: #4a4a4a;
}
```
